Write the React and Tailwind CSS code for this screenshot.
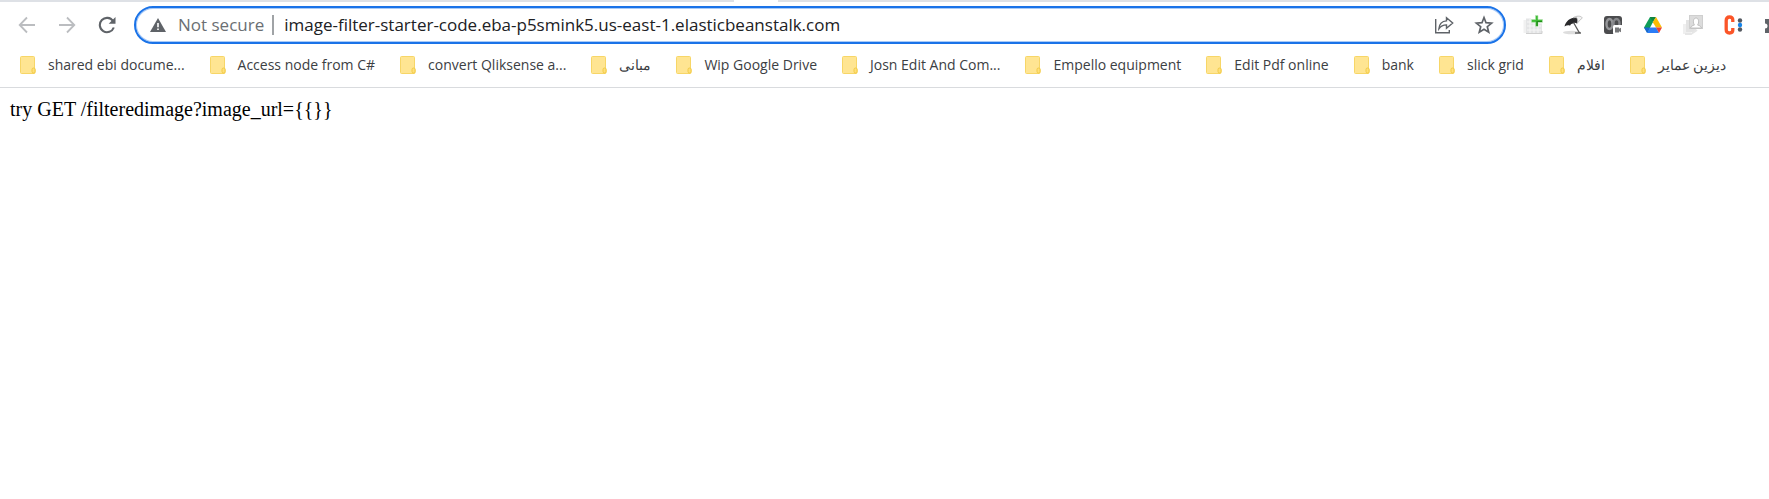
import React from "react";

const bookmarks = [
  { label: "shared ebi docume..." },
  { label: "Access node from C#" },
  { label: "convert Qliksense a..." },
  { label: "مبانى", rtl: true },
  { label: "Wip Google Drive" },
  { label: "Josn Edit And Com..." },
  { label: "Empello equipment" },
  { label: "Edit Pdf online" },
  { label: "bank" },
  { label: "slick grid" },
  { label: "افلام", rtl: true },
  { label: "ديزين عماير", rtl: true },
];

function FolderIcon() {
  return (
    <svg width="16" height="18" viewBox="0 0 16 18" className="shrink-0" aria-hidden="true">
      <path d="M1.5.5h12q1 0 1 1v10.5l.6 1.5v3q0 1-1 1H1.500q-1 0-1-1v-15q0-1 1-1z" fill="#ffe592" stroke="#f7d667" />
      <rect x="12" y="12" width="3" height="5" rx="1.500" fill="#ffe07a" stroke="#f2ca45" />
    </svg>
  );
}

function ArrowIcon({ forward }) {
  return (
    <svg width="18" height="18" viewBox="0 0 18 18" fill="none" stroke="#bbbdc0" strokeWidth="1.8" aria-hidden="true">
      {forward ? <path d="M1 9h15M9 1.500 16.300 9 9 16.500" /> : <path d="M17 9H2M9 1.500 1.700 9 9 16.500" />}
    </svg>
  );
}

function ReloadIcon() {
  return (
    <svg width="18" height="18" viewBox="0 0 18 18" aria-hidden="true">
      <path d="M15 5A7.200 7.200 0 1 0 15.800 11.500" fill="none" stroke="#5f6368" strokeWidth="2.100" />
      <path d="M17.500 1v6.800h-6.800z" fill="#5f6368" />
    </svg>
  );
}

function WarningIcon() {
  return (
    <svg width="16" height="14" viewBox="0 0 16 14" className="shrink-0" aria-hidden="true">
      <path d="M8 0l8 14H0z" fill="#5f6368" />
      <path d="M7.200 5h1.600v4.200H7.200zM7.200 10.400h1.600V12H7.200z" fill="#fff" />
    </svg>
  );
}

function ShareIcon() {
  return (
    <svg width="20" height="18" viewBox="0 0 20 18" fill="none" stroke="#5f6368" strokeWidth="1.400" aria-hidden="true">
      <path d="M1.700 3v13.800h13.600V14" />
      <path d="M12.500 1.700v3.200C8 5.200 5.300 7.800 4.900 12.800c1.800-2.600 4.200-3.900 7.600-3.900v3.300L18.700 7z" />
    </svg>
  );
}

function StarIcon() {
  return (
    <svg width="20" height="20" viewBox="0 0 20 20" fill="none" stroke="#5f6368" strokeWidth="1.700" aria-hidden="true">
      <path d="M10 2.500l2 5.200 5.600.4-4.300 3.600 1.400 5.500-4.700-3-4.700 3 1.400-5.500L2.400 8.100 8 7.700z" />
    </svg>
  );
}

function CalendarPlusIcon() {
  return (
    <svg width="20" height="20" viewBox="0 0 20 20" aria-hidden="true">
      <path d="M.5 5h14v13H.5z" fill="#f1f1f1" />
      <path d="M3 3.500h5v5h11V19H3z" fill="#e4e5e6" />
      <path d="M4 7h14M4 11h14M4 15h14M7 4v14M11 7v11M15 9v9" stroke="#f6f6f6" />
      <path d="M3 18.500h16V16" stroke="#cfcfcf" fill="none" />
      <path d="M12.500.5H15v4h4.500v2.800H15v4h-2.500v-4h-4V4.500h4z" fill="#3fbd35" stroke="#b5e3b0" strokeWidth=".6" />
      <path d="M13.500 5.900h5.500v1.200h-4.200v3.900h-1.300z" fill="#22891b" />
    </svg>
  );
}

function UmbrellaIcon() {
  return (
    <svg width="20" height="20" viewBox="0 0 20 20" aria-hidden="true">
      <ellipse cx="9" cy="17.500" rx="9" ry="1.700" fill="#ddd" />
      <path d="M1.500 11.500C2.500 6 8 2 13.500 2.500c1.500 2 1.500 4 .5 6-1.500-1-2.800-1-4 0-1.300 0-2.300.8-3 2.200-1.700-.7-3.500-.3-5.500.8z" fill="#29292b" />
      <path d="M10 2.800c3.500-2.300 8-2 9-.3.200 1-.5 1.500-1.500 2L14 8.500c1-2 1-4-.5-6z" fill="#f3f3f3" stroke="#aaa" strokeWidth=".7" />
      <path d="M10.500 7.500l6 10.500" stroke="#555" strokeWidth="1.300" />
      <path d="M12 18h6" stroke="#444" strokeWidth="1.200" />
    </svg>
  );
}

function RecorderIcon() {
  return (
    <svg width="20" height="20" viewBox="0 0 20 20" aria-hidden="true">
      <rect x="1" y="1" width="18" height="18" rx="3" fill="#4b4c4e" />
      <ellipse cx="6.500" cy="9" rx="3" ry="5" fill="none" stroke="#96979a" strokeWidth="2.400" />
      <ellipse cx="13.500" cy="8.500" rx="3" ry="4.500" fill="none" stroke="#85868a" strokeWidth="2.400" />
      <rect x="10" y="10" width="10" height="9.500" rx="1.500" fill="#fff" />
      <path d="M12 12.500h4v1.200l2-1v4.600l-2-1v1.200h-4z" fill="#77787a" />
    </svg>
  );
}

function DriveIcon() {
  return (
    <svg width="20" height="18" viewBox="0 0 20 18" aria-hidden="true">
      <path d="M7 1h2.800v5.300L4.500 16.800 1 11.500z" fill="#0f9d58" />
      <path d="M7 1h6L10 6.300z" fill="#11843f" />
      <path d="M13 1l6 10.500h-6L9.800 6.300z" fill="#fbbc04" />
      <path d="M4 17l3-5.500h6.200l2.800 5.500z" fill="#2b7cf6" />
      <path d="M1 11.500h6L4 17z" fill="#1967d2" />
      <path d="M13 11.500h6L16 17z" fill="#ea4335" />
    </svg>
  );
}

function ProfilesIcon() {
  return (
    <svg width="22" height="22" viewBox="0 0 22 22" aria-hidden="true">
      <path d="M1 10h8v10H1z" fill="#efefef" />
      <path d="M4 6h10v12H4z" fill="#e3e3e3" />
      <rect x="7.500" y="1.500" width="13" height="13" fill="#dcdcdc" stroke="#cfcfcf" />
      <path d="M8.500 14c.5-2 2-2.300 4-3-1.800-2-1.500-7 1.500-7s3.300 5 1.500 7c2 .7 3.500 1 4 3z" fill="#fff" stroke="#b5b5b5" strokeWidth=".8" />
      <path d="M3 20h6l6-4" stroke="#e6e6e6" strokeWidth="2" fill="none" />
    </svg>
  );
}

function ClockifyIcon() {
  return (
    <svg width="20" height="20" viewBox="0 0 20 20" aria-hidden="true">
      <path d="M9.800 7V5Q9.800 2 6.500 2T3.200 5.500v9Q3.200 18 6.500 18t3.300-3v-2" fill="none" stroke="#fb5528" strokeWidth="3.300" />
      <circle cx="17" cy="5.500" r="2.200" fill="#53585f" />
      <circle cx="17" cy="10" r="2.200" fill="#1684e8" />
      <circle cx="17" cy="14.500" r="2.200" fill="#53585f" />
    </svg>
  );
}

function PuzzleIcon() {
  return (
    <svg width="20" height="20" viewBox="0 0 20 20" aria-hidden="true">
      <path d="M2 4h5a2.500 2.500 0 0 1 5 0h5v5a2.500 2.500 0 0 1 0 5v4H2v-4.500a2.500 2.500 0 0 0 0-5z" fill="#5f6368" />
    </svg>
  );
}

const extensions = [
  { name: "Calendar", Icon: CalendarPlusIcon },
  { name: "Umbrella", Icon: UmbrellaIcon },
  { name: "Recorder", Icon: RecorderIcon },
  { name: "Google Drive", Icon: DriveIcon },
  { name: "Profiles", Icon: ProfilesIcon },
  { name: "Clockify", Icon: ClockifyIcon },
  { name: "Extensions", Icon: PuzzleIcon },
];

function IconButton({ label, disabled, children }) {
  return (
    <button type="button" aria-label={label} disabled={disabled} className="flex h-9 w-10 shrink-0 items-center justify-center">
      {children}
    </button>
  );
}

export default function App() {
  return (
    <div className="min-h-screen overflow-x-hidden bg-white">
      <header className="border-b border-[#d9dbde] font-['Open_Sans','Noto_Sans',sans-serif]">
        <div className="flex h-[2px] bg-[#dee1e6]">
          <div className="ml-[41.5%] h-full w-[2.5%] bg-white" />
        </div>

        <div className="flex items-center overflow-hidden pt-1 pl-[7px]">
          <nav className="mr-[7px] flex" aria-label="History">
            <IconButton label="Back" disabled><ArrowIcon /></IconButton>
            <IconButton label="Forward" disabled><ArrowIcon forward /></IconButton>
            <IconButton label="Reload"><ReloadIcon /></IconButton>
          </nav>

          <form className="flex h-[38px] min-w-0 flex-1 items-center rounded-full border-2 border-[#1a73e8] pl-3.5 text-[17px] shadow-[inset_0_0_0_1px_#a9caf7]" onSubmit={(e) => e.preventDefault()}>
            <WarningIcon />
            <label htmlFor="address" className="ml-3 shrink-0 text-[#6b6f73]">Not secure</label>
            <span className="mr-2.5 ml-2 h-5 w-0.5 shrink-0 bg-[#a0a3a6]" />
            <input
              id="address"
              type="text"
              spellCheck={false}
              defaultValue="image-filter-starter-code.eba-p5smink5.us-east-1.elasticbeanstalk.com"
              className="min-w-0 flex-1 bg-transparent text-[#202124] outline-none"
            />
            <IconButton label="Share this page"><ShareIcon /></IconButton>
            <IconButton label="Bookmark this tab"><StarIcon /></IconButton>
          </form>

          <div className="-mr-6 ml-[7px] flex" role="group" aria-label="Extensions">
            {extensions.map(({ name, Icon }) => (
              <IconButton key={name} label={name}><Icon /></IconButton>
            ))}
          </div>
        </div>

        <nav className="flex h-[43px] items-center gap-[25px] overflow-hidden pb-0.5 pl-5 text-sm text-[#3c4043]" aria-label="Bookmarks">
          {bookmarks.map(({ label, rtl }) => (
            <a key={label} href="#" className="flex shrink-0 items-center gap-3">
              <FolderIcon />
              <span dir={rtl ? "rtl" : "ltr"} className="whitespace-nowrap">{label}</span>
            </a>
          ))}
        </nav>
      </header>

      <main className="p-2.5 font-['Liberation_Serif',serif] text-xl leading-[22px] text-black">
        try GET /filteredimage?image_url=&#123;&#123;&#125;&#125;
      </main>
    </div>
  );
}
